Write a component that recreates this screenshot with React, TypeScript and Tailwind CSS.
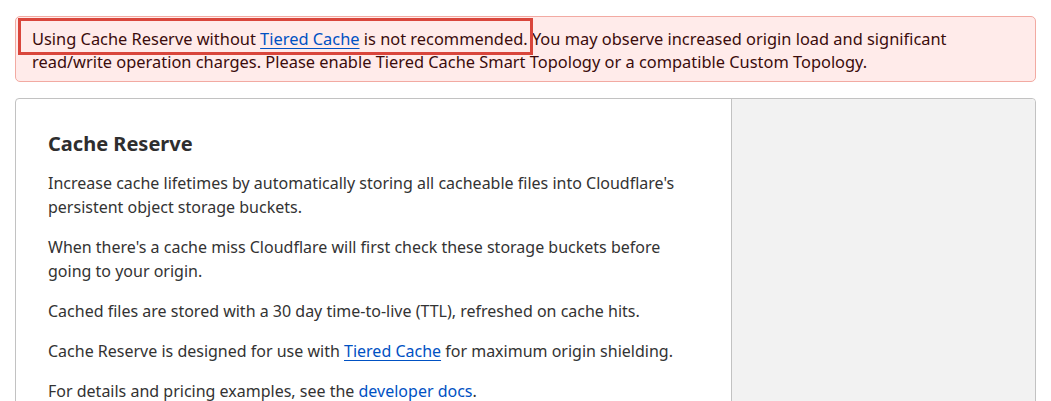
import React from "react";

const Link = ({ children }: { children: React.ReactNode }) => (
  <a href="#" className="text-[#0051c3] underline decoration-[#0051c3] underline-offset-[3px]">
    {children}
  </a>
);

export default function App() {
  return (
    <div
      className="w-[1051px] h-[401px] overflow-hidden bg-white px-[15px] pt-[16px] text-[16px]"
      style={{ fontFamily: '"Noto Sans", "Open Sans", sans-serif' }}
    >
      <div className="relative rounded-[5px] border border-[#f2aaa2] bg-[#ffebea] pl-[16px] pr-[16px] pt-[10px] pb-[8px] text-[16.4px] leading-[23px] text-[#3b0c0c]">
        <p>
          Using Cache Reserve without <Link>Tiered Cache</Link> is not recommended. You may observe increased origin load and significant
          read/write operation charges. Please enable Tiered Cache Smart Topology or a compatible Custom Topology.
        </p>
        <div className="pointer-events-none absolute left-[2px] top-[1px] h-[37px] w-[515px] border-[3px] border-[#d9463c]" />
      </div>

      <div className="mt-[16px] flex h-[400px] rounded-[4px] border border-[#c2c2c2]">
        <div className="w-[715px] pl-[32px] pr-[10px] pt-[30px] text-[#333333]">
          <h2 className="text-[20px] font-bold leading-[30px] text-[#2e2e2e]">Cache Reserve</h2>
          <div className="mt-[12px] flex flex-col gap-[16px] text-[16px] leading-[24px]">
            <p>
              Increase cache lifetimes by automatically storing all cacheable files into Cloudflare's
              <br />
              persistent object storage buckets.
            </p>
            <p>
              When there's a cache miss Cloudflare will first check these storage buckets before
              <br />
              going to your origin.
            </p>
            <p>Cached files are stored with a 30 day time-to-live (TTL), refreshed on cache hits.</p>
            <p>
              Cache Reserve is designed for use with <Link>Tiered Cache</Link> for maximum origin shielding.
            </p>
            <p>
              For details and pricing examples, see the{" "}
              <a href="#" className="text-[#0051c3]">developer docs</a>.
            </p>
          </div>
        </div>
        <div className="flex-1 rounded-r-[4px] border-l border-[#c2c2c2] bg-[#f2f2f2]" />
      </div>
    </div>
  );
}
